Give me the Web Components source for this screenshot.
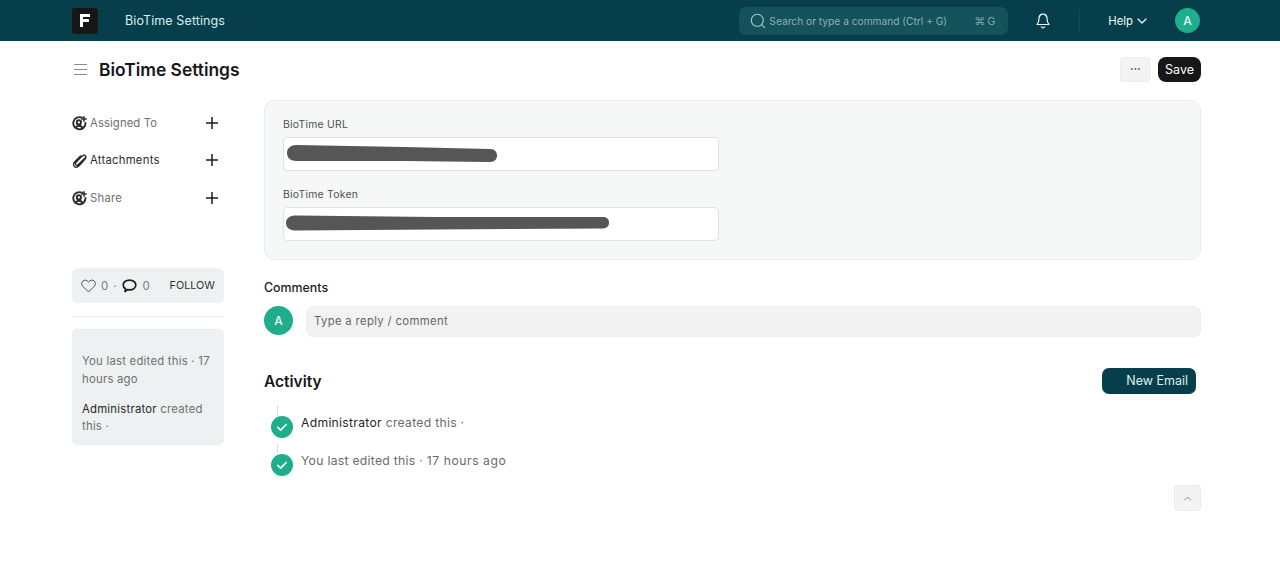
<!DOCTYPE html>
<html lang="en"><head><meta charset="utf-8"><title>BioTime Settings</title>
<style>
html,body{margin:0;padding:0;background:#fff;height:581px;overflow:hidden;font-family:Inter,"Liberation Sans",sans-serif;color:#171717}
x-navbar,x-pagehead,x-layout{display:block}
</style></head><body>
<x-navbar></x-navbar>
<x-pagehead></x-pagehead>
<x-layout>
  <x-sidebar slot="side"></x-sidebar>
  <x-formcard slot="main"></x-formcard>
  <x-comments slot="main"></x-comments>
  <x-activity slot="main"></x-activity>
</x-layout>
<script>
function def(name, html){
  customElements.define(name, class extends HTMLElement{
    constructor(){super();this.attachShadow({mode:'open'}).innerHTML=html;}
  });
}
const avatar=(s,f)=>`<span style="width:${s}px;height:${s}px;border-radius:50%;background:#1fae8c;color:#e6f7f3;display:inline-flex;align-items:center;justify-content:center;font-size:${f}px;font-weight:500;flex:none">A</span>`;
def('x-navbar',`<style>
:host{display:block;height:41px;background:#063f4b;font-size:12px}
.b{height:41px;display:flex;align-items:center;padding:0 80px 0 72px;box-sizing:border-box}
.logo{width:26px;height:26px;border-radius:3px;background:#171717;display:flex;align-items:center;justify-content:center;flex:none}
.crumb{margin-left:27px;color:#d7eef0;font-size:12.500px;letter-spacing:.1px;font-weight:400}
.search{margin-left:auto;width:269px;height:28px;border-radius:7px;background:#14525c;display:flex;align-items:center;box-sizing:border-box;padding:0 13px 0 11px;color:#8fb0b5;font-size:10.200px}
.search svg{margin-right:3px;flex:none}
.kbd{margin-left:auto;font-size:11px;letter-spacing:2px;margin-right:-2px;color:#7fa3a8}
.bell{margin-left:28px;display:flex}
.sep{width:1px;height:22px;background:#0f4d58;margin-left:29px}
.help{margin-left:28px;color:#f1f7f8;font-size:11.300px;display:flex;align-items:center;gap:4px}
.av{margin-left:28px;display:flex}
</style><div class="b">
<div class="logo"><svg width="10" height="13" viewBox="0 0 10 13"><path d="M0 0h10v3H3v2h6v3H3v5H0z" fill="#fff"/></svg></div>
<span class="crumb">BioTime Settings</span>
<div class="search"><svg width="16" height="16" viewBox="0 0 16 16" fill="none" stroke="#a9c6ca" stroke-width="1.100" stroke-linecap="round"><circle cx="7.300" cy="7.300" r="6"/><path d="M11.700 11.700l3 3"/></svg><span>Search or type a command (Ctrl + G)</span><span class="kbd">⌘G</span></div>
<span class="bell"><svg width="14" height="16" viewBox="0 0 14 16" fill="none" stroke="#f3f7f8" stroke-width="1.200" stroke-linecap="round" stroke-linejoin="round"><path d="M7 1.200c-2.600 0-4 2-4 4.300 0 3-.9 4.600-2 6h12c-1.100-1.400-2-3-2-6 0-2.300-1.400-4.300-4-4.300z"/><path d="M5.300 13.800c.5.800 1 1.100 1.700 1.100s1.200-.3 1.700-1.100"/></svg></span>
<span class="sep"></span>
<span class="help">Help<svg width="10" height="6" viewBox="0 0 10 6" fill="none" stroke="#f1f7f8" stroke-width="1.200" stroke-linecap="round" stroke-linejoin="round"><path d="M1 1l4 4 4-4"/></svg></span>
<span class="av">${avatar(25,12)}</span>
</div>`);
def('x-pagehead',`<style>
:host{display:block}
.b{height:59px;display:flex;align-items:center;padding:0 79px 3px 74px;box-sizing:border-box}
h1{margin:1px 0 0 12px;font-size:17.400px;font-weight:600;color:#171717}
.more{margin-left:auto;width:30px;height:25px;border-radius:3px;background:#f3f3f3;border:1px solid #ededed;box-sizing:border-box;display:flex;align-items:center;justify-content:center}
.save{margin-left:8px;width:43px;height:25px;border-radius:8px;background:#171717;color:#fff;font-size:12.500px;display:flex;align-items:center;justify-content:center}
</style><div class="b">
<svg width="13" height="13" viewBox="0 0 13 13" stroke="#8a8a8a" stroke-width="1" fill="none"><path d="M0 1.500h13M0 6.500h13M0 11.500h13"/></svg>
<h1>BioTime Settings</h1>
<span class="more"><svg width="9" height="2" viewBox="0 0 9 2" fill="#555"><circle cx="1" cy="1" r=".9"/><circle cx="4.500" cy="1" r=".9"/><circle cx="8" cy="1" r=".9"/></svg></span>
<span class="save">Save</span>
</div>`);
def('x-layout',`<style>
:host{display:block}
.g{display:grid;grid-template-columns:152px 937px;column-gap:40px;padding:0 0 0 72px}
</style><div class="g"><div><slot name="side"></slot></div><div><slot name="main"></slot></div></div>`);
const userIcon=`<svg width="15" height="15" viewBox="0 0 15 15" fill="none" stroke="#2b2b2b" stroke-width="1.900" stroke-linecap="round"><path d="M10 1.700A6.100 6.100 0 1 0 13.500 7"/><circle cx="6.900" cy="6.400" r="2.100"/><path d="M3.300 11.800c.9-1.500 2.200-2.100 3.600-2.100 1.500 0 2.800.7 3.600 2"/><path d="M12 .8v4.400M9.800 3h4.400" stroke-width="1.500"/></svg>`;
const clip=`<svg width="15" height="15" viewBox="0 0 15 15" fill="none" stroke="#2b2b2b" stroke-width="1.400" stroke-linecap="round" stroke-linejoin="round"><path d="M12.500 5.500 6.700 11.300c-1 1-2.100 1.100-2.800.5-.7-.7-.6-1.900.4-2.900L9.900 3.300c1.300-1.300 2.600-1.400 3.400-.6.900.9.800 2.200-.4 3.500L7.300 12.500c-1.800 1.800-3.700 2-4.900 1-1.300-1.200-1.100-3.200.6-5L8.500 3"/></svg>`;
const plus=`<svg width="12" height="12" viewBox="0 0 12 12" stroke="#1a1a1a" stroke-width="1.500" fill="none"><path d="M6 0v12M0 6h12"/></svg>`;
const row=(ic,t,c,mb,ls)=>`<div class="r" style="margin-bottom:${mb}px">${ic}<span style="color:${c};letter-spacing:${ls}px">${t}</span><span class="p">${plus}</span></div>`;
def('x-sidebar',`<style>
:host{display:block;font-size:11.300px;color:#6f6f6f}
.r{display:flex;align-items:center;height:16px}
.r span:first-of-type{margin-left:3px}
.p{margin-left:auto;margin-right:6px;display:flex}
.st{margin-top:62px;height:35px;border-radius:6px;background:#eef1f1;display:flex;align-items:center;padding:0 9px;box-sizing:border-box;font-size:11.500px;color:#7c7c7c}
.st svg{flex:none}
.fo{margin-left:auto;color:#333;font-size:10.800px}
hr{border:0;border-top:1px solid #ededed;margin:13px 0 12px}
.inf{height:116px;box-sizing:border-box;border-radius:6px;background:#eef1f1;border:1px solid #eaeded;padding:22px 9px 0;line-height:18px;font-size:11.300px;letter-spacing:.25px;color:#6f6f6f}
.inf p{margin:0}
.inf p+p{margin-top:13px;line-height:17px}
b{font-weight:400;color:#262626}
</style>
<div style="padding-top:15px">
${row(userIcon,'Assigned To','#6f6f6f',21,.1)}${row(clip,'Attachments','#2b2b2b',22,.25)}${row(userIcon,'Share','#6f6f6f',0,.25)}
</div>
<div class="st"><svg width="15" height="14" viewBox="0 0 15 14" fill="none" stroke="#555" stroke-width="1" stroke-linejoin="round"><path d="M7.500 13 1.800 7.300C.2 5.700.3 3.400 1.700 2 3.200.6 5.600.8 7.500 3c1.900-2.200 4.300-2.400 5.800-1 1.400 1.400 1.500 3.700-.1 5.300z"/></svg><span style="margin-left:5px">0</span><span style="margin:0 5px">·</span><svg width="15" height="14" viewBox="0 0 15 14" fill="none" stroke="#1c1c1c" stroke-width="1.700" stroke-linejoin="round"><path d="M7.500 1.200c3.600 0 6.300 2 6.300 4.800s-2.700 4.800-6.300 4.800c-.7 0-1.300-.1-1.900-.2L3 12.600l.5-2.800C2 8.900 1.200 7.600 1.200 6c0-2.800 2.700-4.800 6.300-4.800z"/></svg><span style="margin-left:6px">0</span><span class="fo">FOLLOW</span></div>
<hr>
<div class="inf"><p>You last edited this · 17 hours ago</p><p><b>Administrator</b> <span>created</span><br><span>this ·</span></p></div>`);
def('x-formcard',`<style>
:host{display:block;height:160px;box-sizing:border-box;border:1px solid #e9ecec;border-radius:10px;background:#f6f8f8;padding:17px 18px 0}
label{display:block;font-size:10.400px;letter-spacing:.25px;color:#4e4e4e;height:14px;line-height:14px;margin-bottom:5px}
.i{width:436px;height:34px;box-sizing:border-box;background:#fff;border:1px solid #dfe1e2;border-radius:4px;margin-bottom:17px;overflow:hidden;display:block}
svg{display:block}
</style>
<label>BioTime URL</label>
<div class="i"><svg width="434" height="32"><path d="M3 15C3 10 7 7 12 7L120 9 206 11C211 11 213 14 213 17.500 213 21 211 24 206 24L120 23 12 23C7 23 3 20 3 15Z" fill="#565656"/></svg></div>
<label>BioTime Token</label>
<div class="i" style="margin:0"><svg width="434" height="32"><path d="M2 15C2 10 6 7.500 12 7.500L150 9 318 9C323 9 325 11 325 14.500 325 18 323 20.500 318 20.500L150 21.500 12 22.500C6 22.500 2 20 2 15Z" fill="#565656"/></svg></div>`);
def('x-comments',`<style>
:host{display:block;padding-top:20px}
h4{margin:0;font-size:12.400px;font-weight:500;line-height:15px;color:#1c1c1c}
.r{display:flex;gap:13px;margin-top:11px;align-items:flex-start}
.inp{flex:1;height:31px;background:#f2f2f2;border:1px solid #eee;box-sizing:border-box;border-radius:7px;padding:0 7px 1px;display:flex;align-items:center;font-size:11.300px;letter-spacing:.35px;color:#666}
</style><h4>Comments</h4><div class="r">${avatar(29,12)}<div class="inp">Type a reply / comment</div></div>`);
const act=(h)=>`<div class="it"><i class="ln"></i><span class="c"><svg width="22" height="22" viewBox="0 0 23 23"><circle cx="11.500" cy="11.500" r="11.500" fill="#1fae8c"/><path d="M7 11.800l3.100 3 5.800-5.900" stroke="#fff" stroke-width="1.700" fill="none" stroke-linecap="round" stroke-linejoin="round"/></svg></span><span class="t">${h}</span></div>`;
def('x-activity',`<style>
:host{display:block;padding-top:31px}
.h{display:flex;align-items:center;justify-content:space-between;padding-right:5px;height:26px}
h3{margin:0;font-size:15.500px;font-weight:600;color:#171717}
.btn{width:94px;height:26px;border-radius:7px;background:#063f4b;color:#dff2f3;font-size:12.500px;display:flex;align-items:center;justify-content:flex-end;padding:0 8px 1px 0;box-sizing:border-box}
.it{position:relative;height:38px;display:flex;align-items:flex-start;padding-left:7px}
.ln{position:absolute;left:13px;top:-4px;width:1px;height:9px;background:#dcdcdc}
.c{display:flex;margin-top:6px}
.t{margin:5px 0 0 8px;font-size:12.200px;letter-spacing:.28px;color:#6b6b6b;line-height:15px}
.t span.w{letter-spacing:.55px}
b{font-weight:400;color:#262626}
.list{padding-top:16px}
.up{margin:-1px 0 0 auto;width:27px;height:26px;box-sizing:border-box;background:#f3f3f3;border:1px solid #ebebeb;border-radius:4px;display:flex;align-items:center;justify-content:center}
</style>
<div class="h"><h3>Activity</h3><span class="btn">New Email</span></div>
<div class="list">${act('<b>Administrator</b> <span>created this ·</span>')}${act('<span>You last edited this ·</span> <span class="w">17 hours ago</span>')}</div>
<div class="up"><svg width="9" height="5" viewBox="0 0 9 5" fill="none" stroke="#888" stroke-width="1"><path d="M1 4.500 4.500 1 8 4.500"/></svg></div>`);
</script>
</body></html>
